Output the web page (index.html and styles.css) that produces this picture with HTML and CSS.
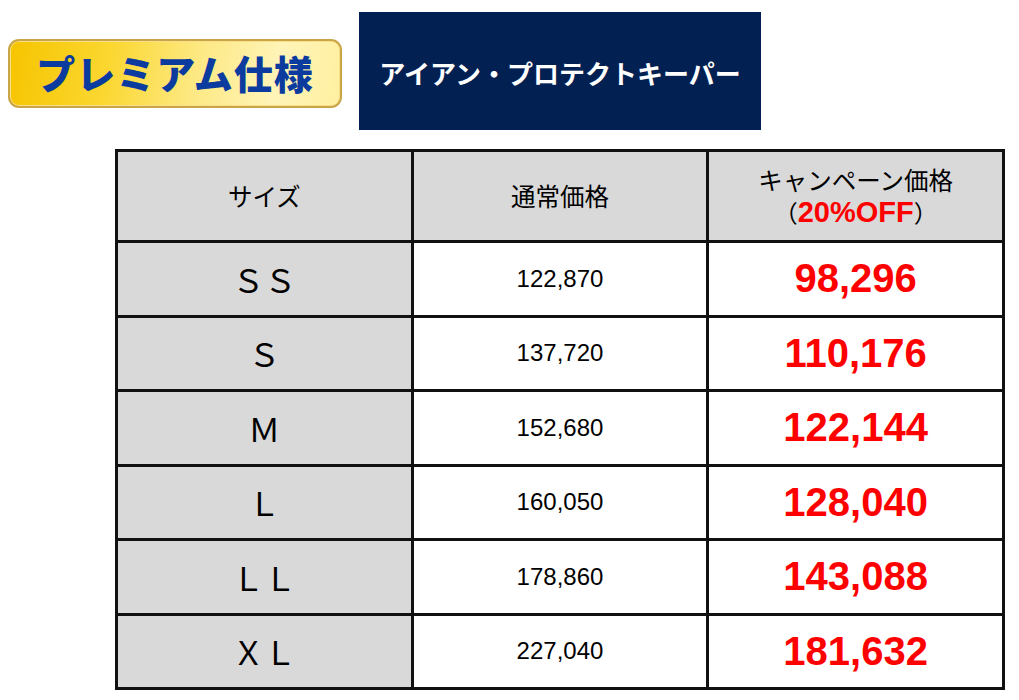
FILE: index.html
```html
<!DOCTYPE html>
<html lang="ja">
<head>
<meta charset="utf-8">
<link rel="stylesheet" href="styles.css">
</head>
<body>
<div class="page">
  <header class="top">
    <div class="badge"><span>プレミアム仕様</span></div>
    <div class="title"><span>アイアン・プロテクトキーパー</span></div>
  </header>
  <table class="price">
    <thead>
      <tr class="head">
        <th>サイズ</th>
        <th>通常価格</th>
        <th><span class="l1">キャンペーン価格</span><br><span class="paren">（</span><span class="off">20%OFF</span><span class="paren">）</span></th>
      </tr>
    </thead>
    <tbody>
      <tr><td class="size">ＳＳ</td><td class="normal">122,870</td><td class="sale">98,296</td></tr>
      <tr><td class="size">Ｓ</td><td class="normal">137,720</td><td class="sale">110,176</td></tr>
      <tr><td class="size">Ｍ</td><td class="normal">152,680</td><td class="sale">122,144</td></tr>
      <tr><td class="size">Ｌ</td><td class="normal">160,050</td><td class="sale">128,040</td></tr>
      <tr><td class="size">ＬＬ</td><td class="normal">178,860</td><td class="sale">143,088</td></tr>
      <tr><td class="size">ＸＬ</td><td class="normal">227,040</td><td class="sale">181,632</td></tr>
    </tbody>
  </table>
</div>
</body>
</html>
```
FILE: styles.css
```css
html, body {
  margin: 0;
  padding: 0;
  background: #fff;
}
body {
  font-family: "Noto Sans CJK JP", "Liberation Sans", sans-serif;
  color: #000;
}
.page {
  width: 1019px;
  height: 700px;
  overflow: hidden;
}
.top {
  display: flex;
  align-items: flex-start;
  padding: 12px 0 0 8px;
  height: 149px;
  box-sizing: border-box;
}
.badge {
  margin-top: 27px;
  width: 334px;
  height: 69px;
  box-sizing: border-box;
  border: 2px solid #c9a548;
  border-radius: 11px;
  background: linear-gradient(100deg, #f6c400 0%, #fbd730 30%, #fde880 55%, #fff4b8 80%, #fff0a0 100%);
  box-shadow: inset 0 0 0 1px #f8e08a;
  display: flex;
  align-items: center;
  justify-content: center;
}
.badge span {
  font-family: "Noto Sans CJK JP", sans-serif;
  font-weight: 900;
  font-size: 39px;
  color: #0b3b9e;
  letter-spacing: 1px;
  line-height: 1;
  margin-top: -2px;
}
.title {
  margin-left: 17px;
  width: 402px;
  height: 118px;
  background: #032052;
  display: flex;
  align-items: center;
  justify-content: center;
}
.title span {
  font-family: "Noto Sans CJK JP", sans-serif;
  font-weight: 700;
  font-size: 26px;
  color: #fff;
  line-height: 1;
  margin-top: 3px;
}
.price {
  margin-left: 115px;
  width: 890px;
  border-collapse: collapse;
  table-layout: fixed;
}
.price th, .price td {
  border: 3px solid #111;
  text-align: center;
  vertical-align: middle;
  padding: 0;
}
.head {
  height: 91px;
}
.head th {
  background: #d9d9d9;
  font-weight: 400;
  font-size: 24.5px;
  line-height: 32px;
}
.paren {
  font-size: 24px;
}
.off {
  font-family: "Liberation Sans", sans-serif;
  font-weight: 700;
  color: #ff0000;
  font-size: 29px;
}
tbody tr {
  height: 74.5px;
}
.size {
  background: #d9d9d9;
  font-size: 32px;
}
.normal {
  font-family: "Liberation Sans", sans-serif;
  font-size: 24px;
}
.sale {
  font-family: "Liberation Sans", sans-serif;
  font-weight: 700;
  font-size: 40px;
  color: #ff0000;
}
```
